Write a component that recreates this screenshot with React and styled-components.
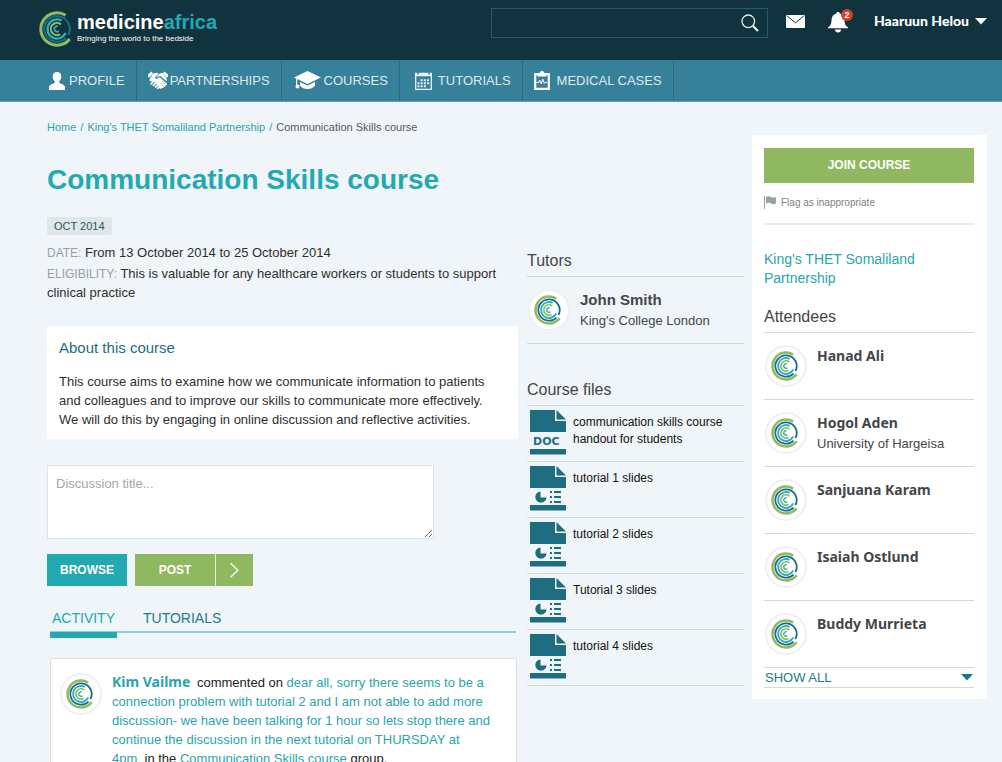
import React from "react";
import styled, { createGlobalStyle } from "styled-components";

const c = {
  header: "#10333d",
  nav: "#37809a",
  page: "#eff5f8",
  teal: "#23a9b1",
  link: "#2ba4ac",
  deep: "#1e6d80",
  green: "#90b861",
  line: "#d3d8db",
  text: "#2e2e2e",
  heading: "#444648",
};
const sans = `"Liberation Sans", Arial, sans-serif`;
const humanist = `"Noto Sans", "Open Sans", sans-serif`;

const GlobalStyle = createGlobalStyle`
  * { box-sizing: border-box; }
  body { margin: 0; background: ${c.page}; color: ${c.text}; font: 13px/19px ${sans}; }
  h1, h2, h3, p, ul { margin: 0; padding: 0; font-weight: normal; }
  ul { list-style: none; }
  a { color: ${c.link}; text-decoration: none; }
  button { border: 0; padding: 0; background: none; color: inherit; font: inherit; cursor: pointer; }
  svg { display: block; flex: none; }
`;

const Header = styled.header`
  display: flex;
  align-items: flex-start;
  height: 60px;
  padding: 8px 15px 0 39px;
  background: ${c.header};
  color: #fff;
`;
const Brand = styled.a`
  display: flex;
  gap: 2px;
  padding-top: 3px;
  margin-right: auto;
  color: #fff;
`;
const BrandName = styled.strong`
  display: block;
  font-size: 20px;
  line-height: 22px;
  span { color: ${c.teal}; }
`;
const Tagline = styled.small`
  display: block;
  font-size: 8px;
  line-height: 12px;
`;
const Search = styled.form`
  display: flex;
  align-items: center;
  width: 277px;
  height: 30px;
  border: 1px solid #1d5d6c;
  input {
    flex: 1;
    min-width: 0;
    height: 100%;
    padding: 0 8px;
    border: 0;
    outline: 0;
    background: none;
    color: #fff;
    font: inherit;
  }
  button { width: 34px; display: flex; justify-content: center; }
`;
const IconButton = styled.button`
  position: relative;
  margin-left: ${(p) => p.$gap}px;
  padding-top: ${(p) => p.$top}px;
`;
const Count = styled.span`
  position: absolute;
  top: 1px;
  right: -5px;
  width: 12px;
  height: 12px;
  border-radius: 50%;
  background: #d0402f;
  color: #fff;
  font: bold 9px/12px ${sans};
  text-align: center;
`;
const UserMenu = styled.button`
  display: flex;
  align-items: center;
  gap: 6px;
  height: 26px;
  margin-left: 26px;
  font: 900 14px/26px Lato, ${humanist};
`;
const Nav = styled.nav`
  display: flex;
  height: 42px;
  padding-left: 38px;
  background: ${c.nav};
  border-bottom: 1px solid #5b9ab0;
`;
const NavLink = styled.a`
  display: flex;
  align-items: center;
  padding: 0 11px;
  border-right: 1px solid #2a6c82;
  color: #dcebf0;
  font-size: 13px;
`;

const Page = styled.main`
  display: grid;
  grid-template-columns: minmax(0, 1fr) 218px 235px;
  column-gap: 8px;
  align-items: start;
  padding: 0 15px 0 47px;
`;
const Content = styled.section`
  padding-top: 16px;
`;
const Crumbs = styled.nav`
  font-size: 11px;
  line-height: 18px;
  color: #5a5a5a;
  a::after { content: "/"; margin: 0 4px; }
`;
const Title = styled.h1`
  margin-top: 24px;
  font-size: 28px;
  line-height: 40px;
  font-weight: bold;
  color: ${c.teal};
`;
const Badge = styled.span`
  display: inline-block;
  margin-top: 17px;
  padding: 0 7px;
  border-radius: 2px;
  background: #dfe7e9;
  color: #2c5560;
  font-size: 11px;
  line-height: 18px;
`;
const Fact = styled.p`
  margin-top: ${(p) => p.$gap}px;
  span { color: #9a9fa2; font-size: 12px; line-height: 12px; }
`;
const About = styled.section`
  margin-top: 24px;
  padding: 12px 16px 10px 12px;
  background: #fff;
  h2 { font-size: 15px; line-height: 20px; color: ${c.deep}; }
  p { margin-top: 14px; }
`;
const Composer = styled.form`
  margin-top: 26px;
  textarea {
    display: block;
    width: 387px;
    max-width: 100%;
    height: 74px;
    padding: 8px;
    border: 1px solid #dfe2e4;
    outline: 0;
    background: #fff;
    font: 13px/19px ${sans};
  }
  textarea::placeholder { color: #a6a6a6; }
`;
const Actions = styled.div`
  display: flex;
  align-items: center;
  gap: 8px;
  margin-top: 15px;
`;
const Button = styled.button`
  height: ${(p) => p.$height || 32}px;
  width: ${(p) => p.$width};
  background: ${(p) => p.$color};
  color: #fff;
  font-size: 12px;
  font-weight: bold;
`;
const SplitButton = styled(Button)`
  display: flex;
  align-items: center;
  span { flex: 1; }
  svg { border-left: 1px solid #e4eedb; }
`;
const Tabs = styled.div`
  display: flex;
  gap: 24px;
  margin: 18px 2px 0 3px;
  border-bottom: 2px solid #8fd0d6;
`;
const Tab = styled.button`
  height: 34px;
  margin-bottom: -7px;
  padding: 5px 2px 4px;
  border-bottom: 6px solid ${(p) => (p.$active ? c.teal : "transparent")};
  color: ${(p) => (p.$active ? c.teal : "#1b7c8b")};
  font-size: 14px;
`;
const Post = styled.article`
  display: flex;
  gap: 10px;
  margin: 25px 1px 0 3px;
  padding: 14px 8px 15px 9px;
  border: 1px solid #dde1e3;
  background: #fff;
  color: #222;
  p { flex: 1; min-width: 0; }
`;
const Author = styled.a`
  margin-right: 3px;
  font: bold 14px/18px ${humanist};
`;

const Middle = styled.section`
  padding: 149px 0 0 1px;
`;
const SectionTitle = styled.h2`
  padding-bottom: 5px;
  border-bottom: 1px solid ${c.line};
  font-size: 16px;
  line-height: 20px;
  color: ${c.heading};
  &:not(:first-child) { margin-top: ${(p) => p.$gap}px; }
`;
const Person = styled.li`
  display: flex;
  gap: 10px;
  height: 67px;
  padding: 12px 0 0 1px;
  border-bottom: 1px solid ${c.line};
  color: ${c.heading};
  line-height: 21px;
`;
const PersonName = styled.strong`
  display: block;
  font-family: ${(p) => (p.$plain ? sans : humanist)};
  font-size: ${(p) => (p.$plain ? 15 : 14)}px;
  line-height: 21px;
`;
const FileRow = styled.li`
  display: flex;
  gap: 7px;
  height: 56px;
  padding: 4px 20px 0 3px;
  border-bottom: 1px solid ${c.line};
  a { padding-top: 4px; color: #111; font-size: 12px; line-height: 17px; }
`;

const Panel = styled.aside`
  margin-top: 33px;
  padding: 13px 13px 11px 12px;
  background: #fff;
`;
const Flag = styled.button`
  display: flex;
  align-items: center;
  gap: 4px;
  width: 100%;
  height: 42px;
  padding-bottom: 2px;
  border-bottom: 2px solid #e8eaeb;
  color: #808080;
  font-size: 10px;
`;
const Partner = styled.p`
  margin: 25px 0 19px;
  font-size: 14px;
`;
const ShowAll = styled.button`
  display: flex;
  align-items: center;
  justify-content: space-between;
  width: 100%;
  height: 20px;
  padding: 0 1px;
  border-bottom: 1px solid ${c.line};
  color: #1b7c8b;
  font-size: 13px;
`;

function arc(r, from, to) {
  const at = (deg) => {
    const a = (deg * Math.PI) / 180;
    return `${(20 + r * Math.cos(a)).toFixed(2)} ${(20 - r * Math.sin(a)).toFixed(2)}`;
  };
  return `M${at(from)}A${r} ${r} 0 ${to - from > 180 ? 1 : 0} 0 ${at(to)}`;
}

function Swirl({ size, green, navy, teal }) {
  return (
    <svg width={size} height={size} viewBox="0 0 40 40" fill="none" aria-hidden="true">
      <path d={arc(18, 58, 322)} stroke={green} strokeWidth="3.4" />
      <path d={arc(14.2, -28, 315)} stroke={navy} strokeWidth="2.4" />
      <path d={arc(10.6, 62, 335)} stroke={teal} strokeWidth="2.6" />
      <path d={arc(6.8, 50, 300)} stroke={green} strokeWidth="2.4" />
      <path d={arc(3, 70, 310)} stroke={teal} strokeWidth="2" />
    </svg>
  );
}

const Ring = styled.span`
  display: grid;
  place-items: center;
  flex: none;
  width: 42px;
  height: 42px;
  border: 2px solid #edf0f1;
  border-radius: 50%;
  background: #fff;
`;
const Avatar = () => (
  <Ring>
    <Swirl size={30} green="#8fba62" navy="#1f6a8a" teal="#2db1b9" />
  </Ring>
);

const SearchIcon = () => (
  <svg width="18" height="18" viewBox="0 0 18 18" fill="none" stroke="#e4ecee">
    <circle cx="7.3" cy="7.3" r="6.3" strokeWidth="1.3" />
    <path d="M12 12l5 5" strokeWidth="2.2" />
  </svg>
);
const MailIcon = () => (
  <svg width="19" height="13" viewBox="0 0 19 13">
    <rect width="19" height="13" rx="1" fill="#fff" />
    <path d="M1 .8l8.5 7L18 .8" fill="none" stroke={c.header} strokeWidth="1" />
  </svg>
);
const BellIcon = () => (
  <svg width="20" height="21" viewBox="0 0 20 21" fill="#fff">
    <path d="M10 0c1 0 1.6.6 1.7 1.4 3 .8 4.6 3.200 4.800 6.600.2 4 .8 5.800 3.500 7.200v1H0v-1C2.700 13.800 3.300 12 3.500 8c.2-3.400 1.800-5.800 4.800-6.600C8.400.6 9 0 10 0z" />
    <path d="M7 17.500h6c0 1.800-1.300 3-3 3s-3-1.200-3-3z" />
  </svg>
);
const Caret = ({ color }) => (
  <svg width="12" height="7" viewBox="0 0 12 7">
    <path d="M0 0h12L6 6.500z" fill={color} />
  </svg>
);
const UserIcon = () => (
  <svg width="20" height="18" viewBox="0 0 20 18" fill="#fff">
    <path d="M8 0c2.700 0 4.300 1.700 4.300 4.400 0 2-.8 3.800-2 4.900v1.500c.5 1 5.700 1.500 5.700 4.400V18H0v-2.800c0-2.900 5.200-3.400 5.700-4.400V9.300c-1.200-1.100-2-2.900-2-4.900C3.700 1.700 5.300 0 8 0z" />
  </svg>
);
const HandshakeIcon = () => (
  <svg width="22" height="19" viewBox="0 0 22 19" fill="#fff">
    <path d="M0 3.500L3.500.5 5 2.500 1.500 6.500 0 6zM20 3.500L16.500.5 15 2.500l3.500 4 1.500-.5z" />
    <path d="M5.300 2.500l3.200-.8 2.200 1L7.500 5.600C6.600 7 8 8.300 9.400 7.500l2.400-1.300 7 6.300c.8 1.200-.4 2.300-1.500 1.700.5 1.200-.6 2.100-1.700 1.500.2 1.100-.9 1.800-1.900 1.200 0 .8-1.100 1.200-1.800.6l-1.300-1.200c.5-1.300-.4-2.300-1.600-2.200.1-1.200-1-2.100-2-1.800-.1-1.200-1.300-1.900-2.300-1.400-.7-1-2-1-2.700-.2L1.500 8.200z" />
    <path d="M11.800 2.500l2.600-.8 4 5.200L19 10.500 12 4.800 9 6.500l-.7-.6z" />
    <path d="M3.200 12.800l1.600-1.700M5.500 14.300l1.600-1.600M7.700 15.900l1.400-1.400M9.800 17.200l.9-.9" stroke="#fff" strokeWidth="1.900" strokeLinecap="round" />
    <path d="M12.500 12l3 3M14 10l3.200 3.200" stroke={c.nav} strokeWidth=".6" />
  </svg>
);
const CapIcon = () => (
  <svg width="31" height="19" viewBox="0 0 31 19" fill="#fff">
    <path d="M14.500 0L28 6.500 14.500 13 1 6.500z" />
    <path d="M7 11l7.500 3.600L22 11v3.500c-1.500 2.400-4.500 3.500-7.500 3.500S8.500 16.900 7 14.500z" />
    <path d="M3.600 8v6" stroke="#fff" strokeWidth="1.200" />
    <circle cx="4.500" cy="15.500" r="2" />
  </svg>
);
const CalendarIcon = () => (
  <svg width="27" height="18" viewBox="0 0 27 18" fill="none" stroke="#e8f1f4">
    <path d="M4.700 3v14.300h15.600V3" strokeWidth="1.300" />
    <path d="M4 2.500h17" strokeWidth="3.500" />
    <path d="M7 0v2.500M18 0v2.500" stroke={c.nav} strokeWidth="1.500" />
    <path d="M9.500 8.200h9M6.500 11.200h12M6.500 14.200h9" strokeWidth="2" strokeDasharray="2 1.200" />
  </svg>
);
const ClipboardIcon = () => (
  <svg width="23" height="19" viewBox="0 0 23 19" fill="none" stroke="#fff">
    <path d="M1.200 3.200h13.600v14.600H1.200z" strokeWidth="2.200" />
    <path d="M3.500 5.500V3h2C5.500 1.200 6.500 0 8 0s2.500 1.200 2.500 3h2v2.500z" fill="#fff" stroke="none" />
    <path d="M2.500 11.500h2l1.200-2.500 1.500 4 1.600-5 1.500 4.500.8-1h2" strokeWidth="1" />
  </svg>
);
const ChevronIcon = () => (
  <svg width="38" height="32" viewBox="0 0 38 32" fill="none" stroke="#fff">
    <path d="M15 9l7.500 7.200L15 23.500" strokeWidth="1.300" />
  </svg>
);
const FlagIcon = () => (
  <svg width="13" height="13" viewBox="0 0 13 13" fill="#98a3a8">
    <path d="M0 0h1v13H0zM2 1c2-1.200 3.500-.8 5 0 1.600.8 3 .8 5 0v6.500c-2 .9-3.400.8-5 0-1.500-.8-3-1-5 0z" />
  </svg>
);
const DocText = styled.text`
  font: bold 11px "DejaVu Sans", sans-serif;
`;
const FileIcon = ({ doc }) => (
  <svg width="36" height="46" viewBox="0 0 36 46" fill={c.deep}>
    <path d="M0 0h25v11h11v11H0z" />
    <path d="M26.500 0L36 9.500h-9.500z" />
    {doc ? (
      <DocText x="3" y="35">DOC</DocText>
    ) : (
      <>
        <path d="M10.500 25.500a5.600 5.600 0 1 0 6 6h-6z" />
        <path d="M20 25h2v2h-2zM24 25h7v2h-7zM20 30h2v2h-2zM24 30h7v2h-7zM20 35h2v2h-2zM24 35h7v2h-7z" />
      </>
    )}
    <path d="M0 39h36v5.500H0z" />
  </svg>
);

const navItems = [
  ["PROFILE", UserIcon],
  ["PARTNERSHIPS", HandshakeIcon],
  ["COURSES", CapIcon],
  ["TUTORIALS", CalendarIcon],
  ["MEDICAL CASES", ClipboardIcon],
];
const files = [
  ["communication skills course handout for students", true],
  ["tutorial 1 slides"],
  ["tutorial 2 slides"],
  ["Tutorial 3 slides"],
  ["tutorial 4 slides"],
];
const attendees = [
  ["Hanad Ali"],
  ["Hogol Aden", "University of Hargeisa"],
  ["Sanjuana Karam"],
  ["Isaiah Ostlund"],
  ["Buddy Murrieta"],
];

export default function App() {
  return (
    <>
      <GlobalStyle />
      <Header>
        <Brand href="#home">
          <Swirl size={36} green="#8fba62" navy="#176d84" teal="#2db1b9" />
          <div>
            <BrandName>medicine<span>africa</span></BrandName>
            <Tagline>Bringing the world to the bedside</Tagline>
          </div>
        </Brand>
        <Search role="search">
          <input type="search" aria-label="Search" />
          <button type="button" aria-label="Search"><SearchIcon /></button>
        </Search>
        <IconButton $gap={18} $top={7} aria-label="Messages"><MailIcon /></IconButton>
        <IconButton $gap={23} $top={4} aria-label="Notifications">
          <BellIcon />
          <Count>2</Count>
        </IconButton>
        <UserMenu>Haaruun Helou<Caret color="#fff" /></UserMenu>
      </Header>
      <Nav>
        {navItems.map(([label, Icon]) => (
          <NavLink href="#" key={label}><Icon />{label}</NavLink>
        ))}
      </Nav>
      <Page>
        <Content>
          <Crumbs aria-label="Breadcrumb">
            <a href="#home">Home</a>
            <a href="#partnership">King's THET Somaliland Partnership</a>
            <span>Communication Skills course</span>
          </Crumbs>
          <Title>Communication Skills course</Title>
          <Badge>OCT 2014</Badge>
          <Fact $gap={8}><span>DATE:</span> From 13 October 2014 to 25 October 2014</Fact>
          <Fact $gap={2}>
            <span>ELIGIBILITY:</span> This is valuable for any healthcare workers or students to support clinical practice
          </Fact>
          <About>
            <h2>About this course</h2>
            <p>
              This course aims to examine how we communicate information to patients and colleagues and to
              improve our skills to communicate more effectively. We will do this by engaging in online
              discussion and reflective activities.
            </p>
          </About>
          <Composer>
            <textarea placeholder="Discussion title..." aria-label="Discussion title" />
            <Actions>
              <Button type="button" $color={c.teal} $width="80px">BROWSE</Button>
              <SplitButton type="button" $color={c.green} $width="118px">
                <span>POST</span>
                <ChevronIcon />
              </SplitButton>
            </Actions>
          </Composer>
          <Tabs role="tablist">
            <Tab role="tab" aria-selected="true" $active>ACTIVITY</Tab>
            <Tab role="tab" aria-selected="false">TUTORIALS</Tab>
          </Tabs>
          <Post>
            <Avatar />
            <p>
              <Author href="#kim">Kim Vailme</Author> commented on{" "}
              <a href="#comment">
                dear all, sorry there seems to be a connection problem with tutorial 2 and I am not able to add
                more discussion- we have been talking for 1 hour so lets stop there and continue the discussion
                in the next tutorial on THURSDAY at<br />4pm
              </a>
              &nbsp; in the <a href="#course">Communication Skills course</a> group.
            </p>
          </Post>
        </Content>
        <Middle>
          <SectionTitle>Tutors</SectionTitle>
          <ul>
            <Person>
              <Avatar />
              <div>
                <PersonName $plain>John Smith</PersonName>
                King's College London
              </div>
            </Person>
          </ul>
          <SectionTitle $gap={36}>Course files</SectionTitle>
          <ul>
            {files.map(([name, doc]) => (
              <FileRow key={name}>
                <FileIcon doc={doc} />
                <a href="#file">{name}</a>
              </FileRow>
            ))}
          </ul>
        </Middle>
        <Panel>
          <Button type="button" $color={c.green} $width="100%" $height={35}>JOIN COURSE</Button>
          <Flag><FlagIcon />Flag as inappropriate</Flag>
          <Partner><a href="#partnership">King's THET Somaliland Partnership</a></Partner>
          <SectionTitle $gap={19}>Attendees</SectionTitle>
          <ul>
            {attendees.map(([name, place]) => (
              <Person key={name}>
                <Avatar />
                <div>
                  <PersonName>{name}</PersonName>
                  {place}
                </div>
              </Person>
            ))}
          </ul>
          <ShowAll>SHOW ALL<Caret color="#137a8c" /></ShowAll>
        </Panel>
      </Page>
    </>
  );
}
